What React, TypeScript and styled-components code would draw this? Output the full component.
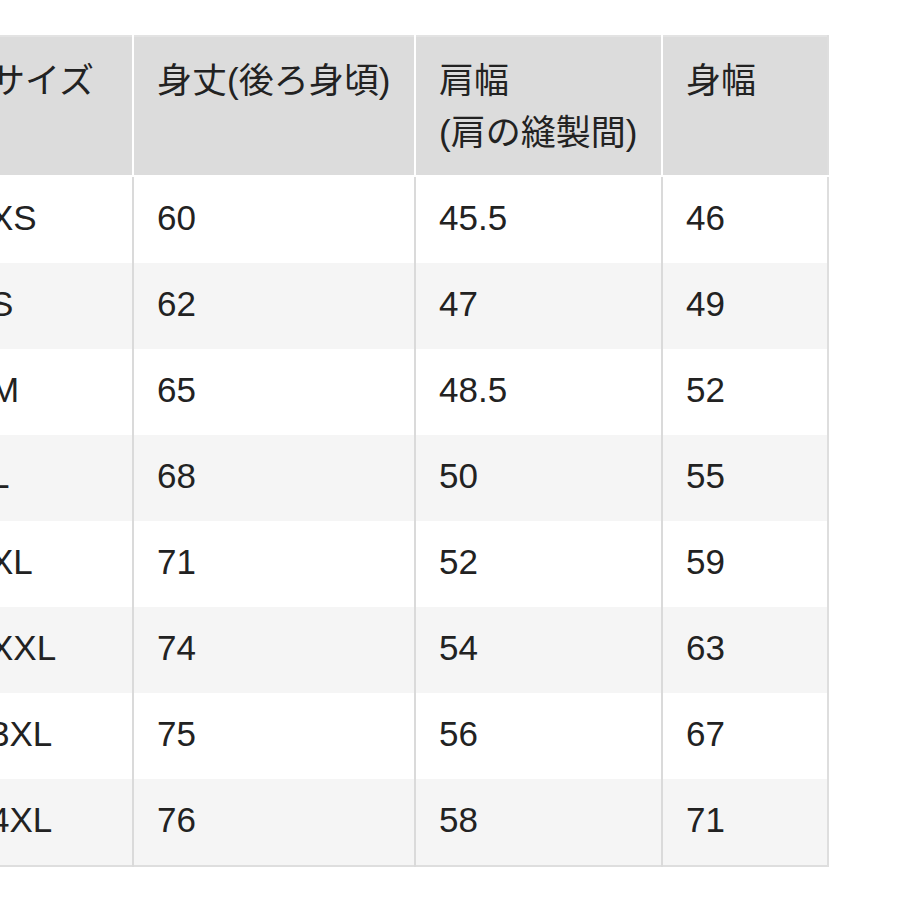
import React from "react";
import styled, { createGlobalStyle } from "styled-components";

const Global = createGlobalStyle`
  html, body { margin: 0; padding: 0; background: #ffffff; }
  body { overflow: hidden; }
`;

const Page = styled.div`
  width: 900px;
  height: 900px;
  overflow: hidden;
  padding-top: 35px;
  box-sizing: border-box;
  background: #fff;
`;

const Table = styled.table`
  margin-left: -33px;
  border-collapse: collapse;
  border-top: 2px solid #e3e3e3;
  border-right: 2px solid #dedede;
  border-bottom: 2px solid #dedede;
  font-family: "Liberation Sans", "Noto Sans CJK JP", Arial, sans-serif;
  font-size: 35px;
  color: #222;
  table-layout: fixed;
`;

const HeadCell = styled.th<{ $w: number }>`
  width: ${(p) => p.$w}px;
  box-sizing: border-box;
  background: #dcdcdc;
  text-align: left;
  vertical-align: top;
  font-weight: 400;
  line-height: 52px;
  padding: 18px 8px 16px 23px;
  height: 139px;
  border-right: 2px solid #ffffff;
  border-bottom: 2px solid #ffffff;
  white-space: nowrap;
  &:last-child { border-right: none; }
`;

const Row = styled.tr<{ $alt: boolean }>`
  background: ${(p) => (p.$alt ? "#f5f5f5" : "#ffffff")};
`;

const Cell = styled.td`
  box-sizing: border-box;
  height: 86px;
  line-height: 52px;
  padding: 15px 8px 19px 23px;
  border-right: 2px solid #dadada;
  vertical-align: middle;
  &:last-child { border-right: none; }
`;

const widths = [166, 282, 247, 166];

const rows: [string, string, string, string][] = [
  ["XS", "60", "45.5", "46"],
  ["S", "62", "47", "49"],
  ["M", "65", "48.5", "52"],
  ["L", "68", "50", "55"],
  ["XL", "71", "52", "59"],
  ["XXL", "74", "54", "63"],
  ["3XL", "75", "56", "67"],
  ["4XL", "76", "58", "71"],
];

export default function App() {
  return (
    <>
      <Global />
      <Page>
        <Table>
          <thead>
            <tr>
              <HeadCell $w={widths[0]}>サイズ</HeadCell>
              <HeadCell $w={widths[1]}>身丈(後ろ身頃)</HeadCell>
              <HeadCell $w={widths[2]}>
                肩幅
                <br />
                (肩の縫製間)
              </HeadCell>
              <HeadCell $w={widths[3]}>身幅</HeadCell>
            </tr>
          </thead>
          <tbody>
            {rows.map((r, i) => (
              <Row key={r[0]} $alt={i % 2 === 1}>
                {r.map((c, j) => (
                  <Cell key={j}>{c}</Cell>
                ))}
              </Row>
            ))}
          </tbody>
        </Table>
      </Page>
    </>
  );
}
